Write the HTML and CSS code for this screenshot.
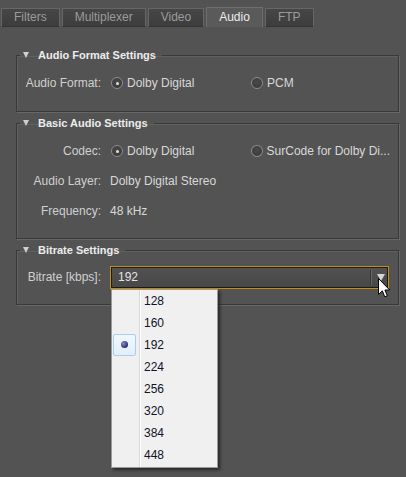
FILE: index.html
```html
<!DOCTYPE html>
<html>
<head>
<meta charset="utf-8">
<link rel="stylesheet" href="styles.css">
</head>
<body>
<div class="tabs">
  <div class="tab">Filters</div>
  <div class="tab">Multiplexer</div>
  <div class="tab">Video</div>
  <div class="tab active">Audio</div>
  <div class="tab">FTP</div>
</div>
<div class="panel">
  <fieldset class="group g1">
    <legend><span class="tri"></span>Audio Format Settings</legend>
    <div class="row">
      <span class="label">Audio Format:</span>
      <div class="opts">
        <span class="radio checked"><span class="dot"></span>Dolby Digital</span>
        <span class="radio"><span class="dot"></span>PCM</span>
      </div>
    </div>
  </fieldset>
  <fieldset class="group g2">
    <legend><span class="tri"></span>Basic Audio Settings</legend>
    <div class="row">
      <span class="label">Codec:</span>
      <div class="opts">
        <span class="radio checked"><span class="dot"></span>Dolby Digital</span>
        <span class="radio"><span class="dot"></span>SurCode for Dolby Di...</span>
      </div>
    </div>
    <div class="row">
      <span class="label">Audio Layer:</span>
      <span class="value">Dolby Digital Stereo</span>
    </div>
    <div class="row">
      <span class="label">Frequency:</span>
      <span class="value">48 kHz</span>
    </div>
  </fieldset>
  <fieldset class="group g3">
    <legend><span class="tri"></span>Bitrate Settings</legend>
    <div class="row">
      <span class="label">Bitrate [kbps]:</span>
      <div class="combo">
        <span class="combo-text">192</span>
        <span class="sep"></span>
        <span class="arrow"></span>
        <svg class="cursor" width="13" height="21" viewBox="0 0 13 21">
          <path d="M0.5 0.5 L0.5 16.5 L4.3 12.8 L6.8 18.8 L9.3 17.8 L6.9 12 L11.7 12 Z" fill="#fff" stroke="#000" stroke-width="1" stroke-linejoin="miter"/>
        </svg>
        <div class="menu">
          <div class="item"><span class="mark"></span>128</div>
          <div class="item"><span class="mark"></span>160</div>
          <div class="item"><span class="mark sel"><span class="bullet"></span></span>192</div>
          <div class="item"><span class="mark"></span>224</div>
          <div class="item"><span class="mark"></span>256</div>
          <div class="item"><span class="mark"></span>320</div>
          <div class="item"><span class="mark"></span>384</div>
          <div class="item"><span class="mark"></span>448</div>
        </div>
      </div>
    </div>
  </fieldset>
</div>
</body>
</html>
```

FILE: styles.css
```css
* { box-sizing: border-box; }
html, body {
  margin: 0;
  background: #535353;
  font-family: "Liberation Sans", Arial, sans-serif;
  font-size: 12px;
  color: #d4d4d4;
}
body { width: 406px; height: 477px; overflow: hidden; }

.tabs {
  display: flex;
  align-items: flex-end;
  gap: 2px;
  padding: 7px 0 0 1px;
  height: 27px;
}
.tab {
  height: 19px;
  padding: 0 12px;
  border: 1px solid #666;
  border-bottom-color: #353535;
  background: linear-gradient(#464646, #3d3d3d);
  color: #9c9c9c;
  line-height: 17px;
}
.tab.active {
  height: 20px;
  background: #5a5a5a;
  border-color: #6e6e6e;
  border-bottom: none;
  color: #ececec;
  line-height: 19px;
}

.panel {
  padding: 21px 7px 0 16px;
  display: flex;
  flex-direction: column;
  gap: 4px;
}
.group {
  margin: 0;
  min-width: 0;
  padding: 6px 0 13px 0;
  border: 1px solid #393939;
  box-shadow: 1px 1px 0 #676767, inset 1px 1px 0 #606060;
}
.group.g2 { padding-bottom: 12px; }
.group.g3 { padding-top: 5px; padding-bottom: 12px; }
legend {
  margin-left: 3px;
  padding: 0 6px 0 3px;
  font-weight: bold;
  font-size: 11px;
  line-height: 14px;
  color: #ececec;
  display: flex;
  align-items: center;
}
.tri {
  width: 0; height: 0;
  border-left: 3.5px solid transparent;
  border-right: 3.5px solid transparent;
  border-top: 6px solid #cfcfcf;
  margin-right: 9px;
}

.row {
  display: grid;
  grid-template-columns: 84px 1fr;
  column-gap: 9px;
  align-items: center;
  height: 30px;
}
.label { text-align: right; color: #d0d0d0; }
.value { color: #d8d8d8; }
.opts { display: flex; }
.radio {
  width: 140px;
  display: flex;
  align-items: center;
  gap: 4px;
  color: #d8d8d8;
  white-space: nowrap;
}
.dot {
  margin-left: 1px;
  width: 12px; height: 12px;
  border-radius: 50%;
  border: 1px solid #8c8c8c;
  background: radial-gradient(circle at 50% 40%, #4a4a4a, #363636);
  display: flex;
  align-items: center;
  justify-content: center;
}
.radio.checked .dot::after {
  content: "";
  width: 3px; height: 3px;
  border-radius: 50%;
  background: #e0e0e0;
}

.combo {
  position: relative;
  height: 23px;
  width: 279px;
  border: 1px solid #c98d0b;
  box-shadow: inset 0 0 0 1px #1b1b1b;
  background: linear-gradient(#525252, #474747);
  display: flex;
  align-items: center;
  padding-left: 7px;
}
.combo-text { flex: 1; color: #e4e4e4; }
.sep {
  width: 2px; height: 15px;
  border-left: 1px solid #363636;
  border-right: 1px solid #666;
  margin-right: 5px;
}
.arrow {
  width: 0; height: 0;
  border-left: 4px solid transparent;
  border-right: 4px solid transparent;
  border-top: 7px solid #d6d6d6;
  margin-right: 3px;
}
.cursor {
  position: absolute;
  left: 267px;
  top: 11px;
  z-index: 3;
}
.menu {
  position: absolute;
  left: 0;
  top: 22px;
  width: 107px;
  border: 1px solid #9a9a9a;
  padding-bottom: 1px;
  background:
    linear-gradient(to right, transparent 27px, #d9d9d9 27px, #d9d9d9 28px, #fff 28px, #fff 29px, transparent 29px),
    #f0f0f0;
  box-shadow: 2px 2px 3px rgba(0,0,0,0.55);
  z-index: 2;
}
.item {
  height: 22px;
  display: flex;
  align-items: center;
  color: #12122a;
  font-size: 12px;
}
.mark {
  width: 23px; height: 22px;
  margin-left: 1px;
  margin-right: 8px;
  display: flex;
  align-items: center;
  justify-content: center;
  border-radius: 2px;
}
.mark.sel {
  border: 1px solid #a9cdf2;
  background: linear-gradient(#f1f7fd, #e3eefa);
}
.bullet {
  width: 7px; height: 7px;
  border-radius: 50%;
  background: radial-gradient(circle at 35% 35%, #8a8ad0, #2c2c70 70%);
}
```
